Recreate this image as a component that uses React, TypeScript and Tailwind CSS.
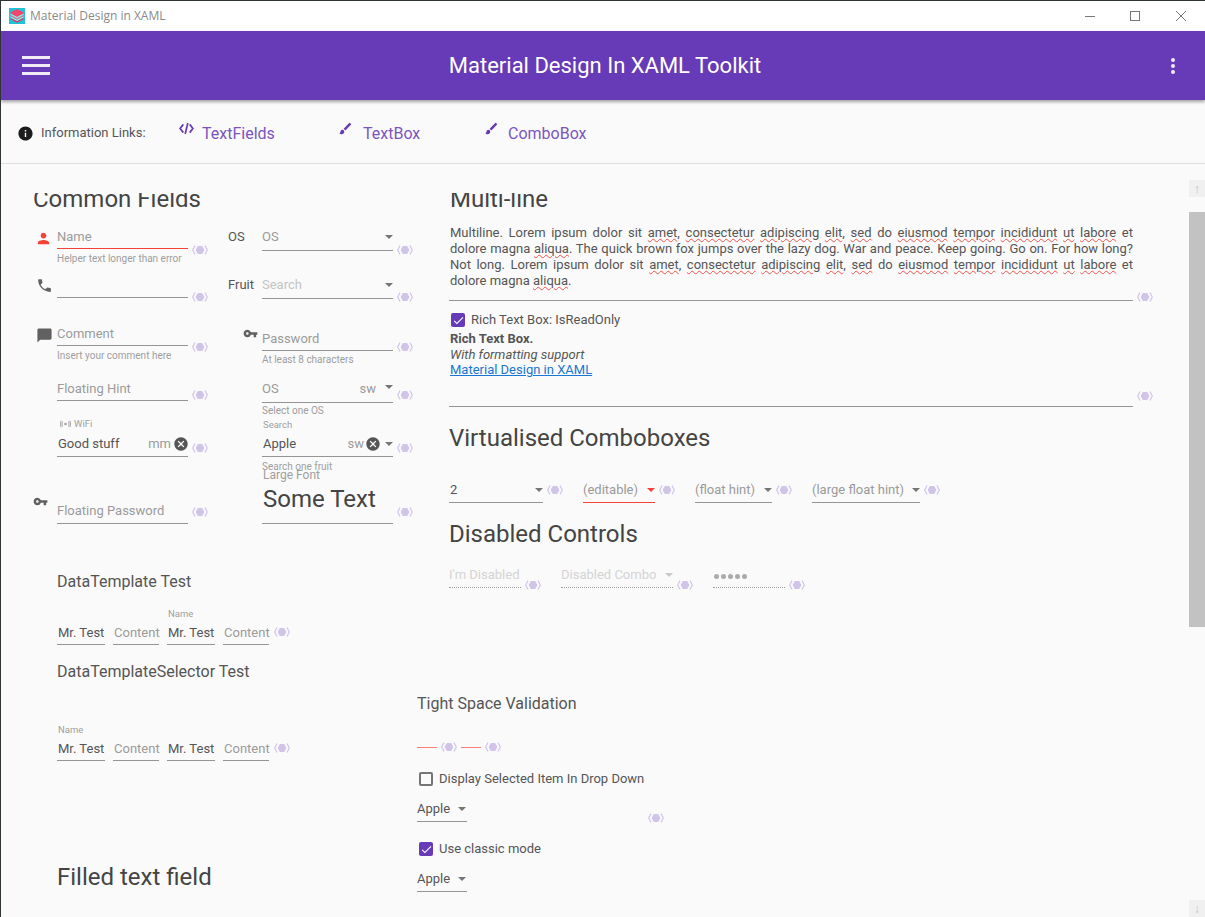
import React from 'react';
import {
  MdBrush,
  MdCancel,
  MdChatBubble,
  MdCheck,
  MdInfo,
  MdPerson,
  MdPhone,
  MdVpnKey,
} from 'react-icons/md';

const Eye = ({ className = '' }: { className?: string }) => (
  <svg viewBox="0 0 16 12" className={'w-[16px] h-[12px] shrink-0 text-[#d1c4e9] ' + className}>
    <path d="M3.6 6 L5.8 2 H10.2 L12.4 6 L10.2 10 H5.8 Z" fill="currentColor" />
    <path d="M3 1.5 L0.7 6 L3 10.5 M13 1.5 L15.3 6 L13 10.5" fill="none" stroke="currentColor" strokeWidth="1.2" />
  </svg>
);

const Caret = ({ className = '' }: { className?: string }) => (
  <span className={'w-0 h-0 border-l-[4px] border-r-[4px] border-t-[4px] border-l-transparent border-r-transparent border-t-[#757575] shrink-0 ' + className} />
);

const Spell = ({ children }: { children: React.ReactNode }) => (
  <span className="underline decoration-wavy decoration-[#f0524a] decoration-1 underline-offset-1">{children}</span>
);

const Check = ({ className = '' }: { className?: string }) => (
  <span className={'w-[14px] h-[14px] rounded-[2px] bg-[#673ab7] flex items-center justify-center shrink-0 ' + className}>
    <MdCheck className="text-white text-[13px]" />
  </span>
);

const Clear = ({ className = '' }: { className?: string }) => <MdCancel className={'text-[#555] text-[16px] shrink-0 ' + className} />;

const hint = 'text-[#9b9b9b]';
const helper = 'text-[10px] leading-[12px] text-[#9e9e9e]';
const line = 'border-b border-[#959595]';

const Lorem = () => (
  <>
    Lorem ipsum dolor sit <Spell>amet</Spell>, <Spell>consectetur</Spell> <Spell>adipiscing</Spell> <Spell>elit</Spell>,{' '}
    <Spell>sed</Spell> do <Spell>eiusmod</Spell> <Spell>tempor</Spell> <Spell>incididunt</Spell> <Spell>ut</Spell>{' '}
    <Spell>labore</Spell> et dolore magna <Spell>aliqua</Spell>.
  </>
);

const TemplateRow = ({ topName }: { topName: boolean }) => (
  <div className="flex items-end ml-[56px] text-[13px] gap-[8px]">
    <div className="w-[48px]">
      {!topName && <div className="text-[9.5px] leading-[12px] text-[#9e9e9e] mb-[3px] ml-[1px]">Name</div>}
      <div className={'h-[22px] pl-[1px] text-[#555] ' + line}>Mr. Test</div>
    </div>
    <div className={'w-[46px] h-[22px] pl-[1px] ' + hint + ' ' + line}>Content</div>
    <div className="w-[48px]">
      {topName && <div className="text-[9.5px] leading-[12px] text-[#9e9e9e] mb-[3px] ml-[1px]">Name</div>}
      <div className={'h-[22px] pl-[1px] text-[#555] ' + line}>Mr. Test</div>
    </div>
    <div className={'w-[46px] h-[22px] pl-[1px] ' + hint + ' ' + line}>Content</div>
    <Eye className="-ml-[3px] mb-[7px]" />
  </div>
);

const App = () => {
  return (
    <div className="w-[1205px] h-[917px] overflow-hidden flex flex-col bg-[#fafafa] border-t border-l border-[#2f3437] text-[13px] text-[#555] [font-family:Roboto,sans-serif]">
      {/* window title bar */}
      <div className="h-[30px] shrink-0 bg-white flex items-center">
        <svg viewBox="0 0 16 16" className="w-[16px] h-[16px] ml-[8px]">
          <rect width="16" height="16" fill="#1cc4d6" />
          <path d="M8 1 L14.5 4.3 V5.6 L8 8.9 L1.5 5.6 V4.3 Z" fill="#f2476a" />
          <path d="M1.5 7 L8 10.3 L14.5 7 V8.2 L8 11.5 L1.5 8.2 Z" fill="#f6718c" />
          <path d="M1.5 9.9 L8 13.2 L14.5 9.9 V11.3 L8 14.7 L1.5 11.3 Z" fill="#ec2f5b" />
          <path d="M1.5 6.2 L8 9.5 L14.5 6.2 M1.5 9.1 L8 12.4 L14.5 9.1" fill="none" stroke="#fff" strokeWidth="0.7" />
        </svg>
        <span className="ml-[5px] text-[12px] text-[#8a8a8a] [font-family:'Open_Sans',sans-serif]">Material Design in XAML</span>
        <div className="ml-auto flex items-center">
          <span className="w-[10px] h-px bg-[#777] mr-[35px]" />
          <span className="w-[10px] h-[10px] border border-[#777] mr-[36px]" />
          <svg viewBox="0 0 10 10" className="w-[10px] h-[10px] mr-[19px]">
            <path d="M0 0 L10 10 M10 0 L0 10" stroke="#777" strokeWidth="1" />
          </svg>
        </div>
      </div>

      {/* app bar */}
      <div className="h-[69px] shrink-0 bg-[#673ab7] relative z-10 shadow-[0_2px_3px_rgba(0,0,0,0.35)] flex items-center text-white">
        <div className="ml-[21px] w-[28px] flex flex-col gap-[5px]">
          <span className="h-[3px] bg-[#f0ebf8]" />
          <span className="h-[3px] bg-[#f0ebf8]" />
          <span className="h-[3px] bg-[#f0ebf8]" />
        </div>
        <div className="flex-1 text-center text-[22px] pr-[11px]">Material Design In XAML Toolkit</div>
        <div className="mr-[30px] flex flex-col gap-[2px]">
          <span className="w-[4px] h-[4px] rounded-full bg-[#f0ebf8]" />
          <span className="w-[4px] h-[4px] rounded-full bg-[#f0ebf8]" />
          <span className="w-[4px] h-[4px] rounded-full bg-[#f0ebf8]" />
        </div>
      </div>

      {/* information links */}
      <div className="h-[64px] shrink-0 pt-[3px] border-b border-[#dfdfdf] flex items-center">
        <MdInfo className="ml-[16px] text-[#1c1c1c] text-[17px]" />
        <span className="ml-[7px] w-[138px] text-[13px]">Information Links:</span>
        <svg viewBox="0 0 16 16" className="w-[15px] h-[15px] -mt-[10px]" fill="none" stroke="#673ab7" strokeWidth="1.8">
          <path d="M4.6 3.6 L1.2 8 L4.6 12.4 M11.4 3.6 L14.8 8 L11.4 12.4 M9.4 2.2 L6.6 13.8" />
        </svg>
        <span className="ml-[8px] mt-[2px] w-[65px] text-[16px] text-[#7a55c0]">TextFields</span>
        <MdBrush className="ml-[71px] text-[#673ab7] text-[15px] -mt-[10px]" />
        <span className="ml-[10px] mt-[2px] w-[57px] text-[16px] text-[#7a55c0]">TextBox</span>
        <MdBrush className="ml-[64px] text-[#673ab7] text-[15px] -mt-[10px]" />
        <span className="ml-[9px] mt-[2px] text-[16px] text-[#7a55c0]">ComboBox</span>
      </div>

      <div className="flex-1 min-h-0 flex">
        {/* scrolled page, clipped at its top */}
        <div className="flex-1 min-w-0 mt-[29px] overflow-hidden flex">
          {/* left column */}
          <div className="w-[416px] shrink-0 flex flex-col">
            <div className="ml-[32px] -mt-[8px] h-[28px] leading-[28px] text-[24px] text-[#444]">Common Fields</div>

            <div className="flex h-[48px] mt-[13px]">
              <div className="w-[227px] flex">
                <MdPerson className="ml-[34px] mr-[5px] mt-[4px] text-[#f44336] text-[17px]" />
                <div className="w-[131px] mt-[1px]">
                  <div className={'h-[22px] border-b border-[#f44336] ' + hint}>Name</div>
                  <div className={'mt-[4px] ' + helper}>Helper text longer than error</div>
                </div>
                <Eye className="ml-[4px] mt-[18px]" />
              </div>
              <div className="w-[34px] h-[22px] leading-[22px]">OS</div>
              <div className={'w-[131px] h-[25px] pb-[3px] flex items-center justify-between ' + hint + ' ' + line}>
                OS
                <Caret />
              </div>
              <Eye className="ml-[4px] mt-[18px]" />
            </div>

            <div className="flex h-[48px]">
              <div className="w-[227px] flex">
                <MdPhone className="ml-[35px] mr-[4px] mt-[3px] text-[#616161] text-[17px]" />
                <div className={'w-[131px] h-[24px] ' + line} />
                <Eye className="ml-[4px] mt-[17px]" />
              </div>
              <div className="w-[34px] h-[22px] leading-[22px]">Fruit</div>
              <div className={'w-[131px] h-[25px] pb-[3px] flex items-center justify-between text-[#c4c4c4] ' + line}>
                Search
                <Caret />
              </div>
              <Eye className="ml-[4px] mt-[17px]" />
            </div>

            <div className="flex h-[56px]">
              <div className="w-[227px] flex">
                <MdChatBubble className="ml-[35px] mr-[4px] mt-[5px] text-[#616161] text-[17px]" />
                <div className="w-[131px]">
                  <div className={'h-[24px] flex items-center ' + hint + ' ' + line}>Comment</div>
                  <div className={'mt-[4px] ' + helper}>Insert your comment here</div>
                </div>
                <Eye className="ml-[4px] mt-[19px]" />
              </div>
              <MdVpnKey className="ml-[15px] mr-[4px] mt-[4px] text-[#616161] text-[15px]" />
              <div className="w-[131px] mt-[5px]">
                <div className={'h-[24px] flex items-center ' + hint + ' ' + line}>Password</div>
                <div className={'mt-[3px] ' + helper}>At least 8 characters</div>
              </div>
              <Eye className="ml-[4px] mt-[19px]" />
            </div>

            <div className="flex h-[36px]">
              <div className="w-[227px] flex">
                <div className={'ml-[56px] w-[131px] h-[23px] flex items-center ' + hint + ' ' + line}>Floating Hint</div>
                <Eye className="ml-[4px] mt-[11px]" />
              </div>
              <div className="ml-[34px] w-[131px]">
                <div className={'h-[25px] pb-[3px] flex items-center ' + hint + ' ' + line}>
                  OS
                  <span className="ml-auto mr-[9px]">sw</span>
                  <Caret className="-mt-[3px]" />
                </div>
                <div className={'mt-[2px] ' + helper}>Select one OS</div>
              </div>
              <Eye className="ml-[4px] mt-[11px]" />
            </div>

            <div className="flex h-[54px]">
              <div className="w-[227px] flex">
                <div className="ml-[56px] w-[131px] mt-[4px]">
                  <div className="flex items-center h-[12px] ml-[3px] text-[9.5px] text-[#9e9e9e]">
                    <svg viewBox="0 0 12 8" className="w-[11px] h-[8px] mr-[3px]" fill="none" stroke="#9e9e9e" strokeWidth="1">
                      <circle cx="6" cy="4" r="1.4" fill="#9e9e9e" stroke="none" />
                      <path d="M2.8 1.2 Q1.2 4 2.8 6.8 M9.2 1.2 Q10.8 4 9.2 6.8 M1.2 0.4 Q-0.6 4 1.2 7.6 M10.8 0.4 Q12.6 4 10.8 7.6" />
                    </svg>
                    WiFi
                  </div>
                  <div className={'h-[25px] mt-[2px] flex items-center pl-[1px] ' + line}>
                    Good stuff
                    <span className={'ml-auto mr-[2px] ' + hint}>mm</span>
                    <Clear className="-mr-[1px]" />
                  </div>
                </div>
                <Eye className="ml-[4px] mt-[28px]" />
              </div>
              <div className="ml-[34px] w-[131px] mt-[5px]">
                <div className="h-[12px] leading-[12px] ml-[1px] text-[9.5px] text-[#9e9e9e]">Search</div>
                <div className={'h-[25px] mt-[1px] flex items-center pl-[1px] ' + line}>
                  Apple
                  <span className={'ml-auto mr-[1px] ' + hint}>sw</span>
                  <Clear />
                  <Caret className="ml-[4px]" />
                </div>
                <div className={'mt-[4px] ' + helper}>Search one fruit</div>
              </div>
              <Eye className="ml-[4px] mt-[28px]" />
            </div>

            <div className="flex h-[55px]">
              <div className="w-[227px] flex">
                <MdVpnKey className="ml-[32px] mr-[9px] mt-[26px] text-[#616161] text-[15px]" />
                <div className={'w-[131px] h-[56px] pb-[3px] flex items-end ' + hint + ' ' + line}>Floating Password</div>
                <Eye className="ml-[4px] mt-[38px]" />
              </div>
              <div className="ml-[34px] w-[131px]">
                <div className={'h-[56px] ' + line}>
                  <div className="ml-[1px] h-[15px] leading-[15px] text-[12px] text-[#9e9e9e]">Large Font</div>
                  <div className="ml-[1px] h-[30px] leading-[30px] mt-[1px] text-[24px] text-[#444]">Some Text</div>
                </div>
              </div>
              <Eye className="ml-[4px] mt-[38px]" />
            </div>

            <div className="ml-[56px] mt-[49px] text-[16px] leading-[20px]">DataTemplate Test</div>
            <div className="mt-[16px]">
              <TemplateRow topName />
            </div>
            <div className="ml-[56px] mt-[17px] text-[16px] leading-[20px]">DataTemplateSelector Test</div>
            <div className="mt-[42px]">
              <TemplateRow topName={false} />
            </div>
            <div className="ml-[56px] mt-[101px] text-[24px] leading-[30px] text-[#444]">Filled text field</div>
          </div>

          {/* right column */}
          <div className="flex-1 min-w-0 flex flex-col">
            <div className="ml-[33px] -mt-[8px] h-[28px] leading-[28px] text-[24px] text-[#444]">Multi-line</div>
            <div className="ml-[32px] mt-[12px] flex items-start">
              <div className={'w-[684px] h-[76px] pl-[1px] text-justify leading-[16px] ' + line}>
                Multiline. <Lorem /> The quick brown fox jumps over the lazy dog. War and peace. Keep going. Go on. For how long? Not long. <Lorem />
              </div>
              <Eye className="ml-[4px] mt-[66px]" />
            </div>
            <div className="ml-[34px] mt-[9px] flex items-center h-[16px]">
              <Check />
              <span className="ml-[6px]">Rich Text Box: IsReadOnly</span>
            </div>
            <div className="ml-[32px] mt-[3px] flex items-start">
              <div className={'w-[684px] h-[76px] pl-[1px] leading-[15.6px] ' + line}>
                <div className="font-bold">Rich Text Box.</div>
                <div className="italic">With formatting support</div>
                <div className="text-[#1976d2] underline">Material Design in XAML</div>
              </div>
              <Eye className="ml-[4px] mt-[59px]" />
            </div>
            <div className="ml-[32px] mt-[16px] text-[24px] leading-[30px] text-[#444]">Virtualised Comboboxes</div>
            <div className="ml-[32px] mt-[26px] flex items-start">
              <div className={'w-[94px] h-[24px] flex items-center justify-between pl-[1px] pb-[1px] ' + line}>
                2
                <Caret className="-mt-[1px]" />
              </div>
              <Eye className="ml-[4px] mt-[5px]" />
              <div className={'ml-[20px] w-[72px] h-[24px] flex items-center justify-between pb-[1px] border-b border-[#f44336] ' + hint}>
                (editable)
                <Caret className="border-t-[#f44336] -mt-[1px]" />
              </div>
              <Eye className="ml-[4px] mt-[5px]" />
              <div className={'ml-[20px] w-[77px] h-[24px] flex items-center justify-between pb-[1px] ' + hint + ' ' + line}>
                (float hint)
                <Caret className="-mt-[1px]" />
              </div>
              <Eye className="ml-[4px] mt-[5px]" />
              <div className={'ml-[20px] w-[108px] h-[24px] flex items-center justify-between pb-[1px] ' + hint + ' ' + line}>
                (large float hint)
                <Caret className="-mt-[1px]" />
              </div>
              <Eye className="ml-[4px] mt-[5px]" />
            </div>
            <div className="ml-[32px] mt-[16px] text-[24px] leading-[30px] text-[#444]">Disabled Controls</div>
            <div className="ml-[32px] mt-[15px] flex items-start text-[#d4d4d4]">
              <div className="w-[72px] h-[24px] pb-[1px] flex items-center border-b border-dotted border-[#9a9a9a]">I'm Disabled</div>
              <Eye className="ml-[4px] mt-[15px]" />
              <div className="ml-[20px] w-[112px] h-[24px] pb-[1px] flex items-center justify-between border-b border-dotted border-[#9a9a9a]">
                Disabled Combo
                <Caret className="border-t-[#c8c8c8] -mt-[1px]" />
              </div>
              <Eye className="ml-[4px] mt-[15px]" />
              <div className="ml-[20px] w-[72px] h-[24px] pb-[1px] flex items-center gap-[2px] pl-[1px] border-b border-dotted border-[#9a9a9a]">
                <span className="w-[5px] h-[5px] rounded-full bg-[#aaa] mt-[3px]" />
                <span className="w-[5px] h-[5px] rounded-full bg-[#aaa] mt-[3px]" />
                <span className="w-[5px] h-[5px] rounded-full bg-[#aaa] mt-[3px]" />
                <span className="w-[5px] h-[5px] rounded-full bg-[#aaa] mt-[3px]" />
                <span className="w-[5px] h-[5px] rounded-full bg-[#aaa] mt-[3px]" />
              </div>
              <Eye className="ml-[4px] mt-[15px]" />
            </div>

            <div className="mt-[103px] text-[16px] leading-[20px]">Tight Space Validation</div>
            <div className="mt-[27px] flex items-center h-[12px]">
              <span className="w-[20px] h-px bg-[#f77f78]" />
              <Eye className="ml-[4px]" />
              <span className="ml-[4px] w-[20px] h-px bg-[#f77f78]" />
              <Eye className="ml-[4px]" />
            </div>
            <div className="ml-[2px] mt-[18px] flex items-center h-[16px]">
              <span className="w-[14px] h-[14px] rounded-[2px] border-2 border-[#757575] shrink-0" />
              <span className="ml-[6px]">Display Selected Item In Drop Down</span>
            </div>
            <div className="mt-[11px] flex items-start">
              <div className={'w-[50px] h-[24px] flex items-center pb-[1px] ' + line}>
                Apple
                <Caret className="ml-[8px] -mt-[1px]" />
              </div>
              <Eye className="ml-[181px] mt-[14px]" />
            </div>
            <div className="ml-[2px] mt-[17px] flex items-center h-[16px]">
              <Check />
              <span className="ml-[6px]">Use classic mode</span>
            </div>
            <div className="mt-[11px]">
              <div className={'w-[50px] h-[24px] flex items-center pb-[1px] ' + line}>
                Apple
                <Caret className="ml-[8px] -mt-[1px]" />
              </div>
            </div>
          </div>
        </div>

        {/* vertical scrollbar */}
        <div className="w-[16px] shrink-0 flex flex-col pt-[16px]">
          <div className="h-[17px] bg-[#f0f0f0] flex items-center justify-center text-[#c4c4c4] text-[12px] leading-none">↑</div>
          <div className="h-[15px]" />
          <div className="h-[415px] bg-[#c2c2c2]" />
          <div className="flex-1" />
          <div className="h-[17px] bg-[#f0f0f0] flex items-center justify-center text-[#c4c4c4] text-[12px] leading-none">↓</div>
        </div>
      </div>
    </div>
  );
};

export default App;
